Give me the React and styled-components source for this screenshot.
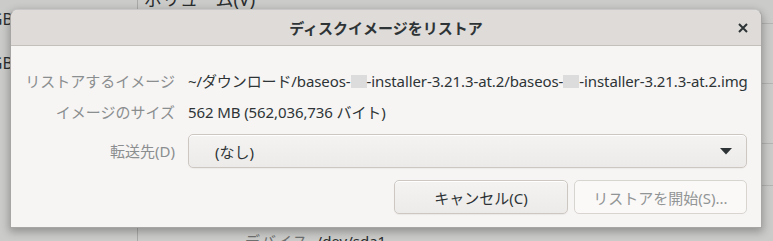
import React from "react";
import styled, { createGlobalStyle } from "styled-components";

const Global = createGlobalStyle`
  html, body { margin: 0; padding: 0; }
  body {
    width: 773px; height: 241px; overflow: hidden;
    font-family: "Noto Sans", "Noto Sans CJK JP", sans-serif;
    background: #cbcbc9;
  }
`;

const Screen = styled.div`
  position: relative;
  width: 773px;
  height: 241px;
  overflow: hidden;
  background: #cbcbc9;
  display: flex;
`;

const Sidebar = styled.div`
  width: 137px;
  flex: none;
  border-right: 1px solid #a9a9a7;
  display: flex;
  flex-direction: column;
  padding-top: 9px;
  gap: 6px;
`;

const SideItem = styled.div`
  margin-left: -36px;
  display: flex;
  flex-direction: column;
  color: #2a2d2e;
`;

const SideTitle = styled.span`
  font-size: 16px;
  line-height: 20px;
`;

const SideSub = styled.span`
  font-size: 13px;
  line-height: 17px;
  margin-top: 1px;
`;

const Main = styled.div`
  flex: 1;
  display: flex;
  flex-direction: column;
`;

const MainTitle = styled.div`
  margin-top: -12px;
  padding-left: 6px;
  font-size: 18px;
  line-height: 22px;
  color: #2a2d2e;
`;

const ListLine = styled.div`
  height: 1px;
  background: #b4b4b2;
  margin-top: ${(p) => p.$gap}px;
`;

const BottomInfo = styled.div`
  margin-top: auto;
  display: flex;
  gap: 8px;
  padding-left: 107px;
  font-size: 15px;
  line-height: 18px;
  margin-bottom: -9px;
`;

const InfoLabel = styled.span`
  color: #6f7170;
  letter-spacing: 1px;
`;

const InfoValue = styled.span`
  color: #2a2d2e;
`;

const Dialog = styled.div`
  position: absolute;
  left: 10px;
  top: 9px;
  width: 752px;
  height: 219px;
  box-sizing: border-box;
  border: 1px solid rgba(0, 0, 0, 0.32);
  border-top-color: rgba(0, 0, 0, 0.18);
  border-radius: 8px 8px 0 0;
  background: #f6f5f4;
  box-shadow: 0 3px 9px 1px rgba(0, 0, 0, 0.28);
  display: flex;
  flex-direction: column;
  overflow: hidden;
`;

const Header = styled.div`
  height: 35px;
  flex: none;
  display: flex;
  align-items: center;
  justify-content: center;
  position: relative;
  background: #dedbd8;
  border-bottom: 1px solid #c3bfbb;
`;

const Title = styled.div`
  font-size: 15px;
  font-weight: 700;
  color: #2e3436;
`;

const Close = styled.div`
  position: absolute;
  right: 12px;
  top: 12px;
  width: 12px;
  height: 12px;
  display: flex;
  align-items: center;
  justify-content: center;
`;

const Body = styled.div`
  flex: 1;
  display: flex;
  flex-direction: column;
  padding: 24px 14px 14px 0;
`;

const Row = styled.div`
  display: grid;
  grid-template-columns: 164px 1fr;
  column-gap: 13px;
  align-items: center;
  margin-top: ${(p) => p.$mt || 0}px;
`;

const Label = styled.div`
  text-align: right;
  font-size: 15px;
  line-height: 22px;
  color: #8b8e8f;
  white-space: nowrap;
`;

const Value = styled.div`
  font-size: 15px;
  line-height: 22px;
  color: #2e3436;
  white-space: nowrap;
  letter-spacing: -0.1px;
`;

const Redact = styled.span`
  display: inline-block;
  width: 16px;
  height: 13px;
  background: #dcdcdc;
  vertical-align: -1px;
`;

const Combo = styled.div`
  height: 34px;
  box-sizing: border-box;
  border: 1px solid #cdc7c2;
  border-radius: 5px;
  background: linear-gradient(#f4f3f2, #edebe9);
  box-shadow: inset 0 1px #ffffff, 0 1px 1px rgba(0, 0, 0, 0.04);
  display: flex;
  align-items: center;
  justify-content: space-between;
  padding: 0 14px 0 26px;
  font-size: 15px;
  color: #2e3436;
`;

const Buttons = styled.div`
  margin-top: 12px;
  display: flex;
  justify-content: flex-end;
  gap: 6px;
`;

const Button = styled.div`
  width: ${(p) => p.$w}px;
  height: 34px;
  box-sizing: border-box;
  border: 1px solid ${(p) => (p.$disabled ? "#d8d4d0" : "#cdc7c2")};
  border-radius: 5px;
  background: ${(p) =>
    p.$disabled ? "#faf9f8" : "linear-gradient(#f4f3f2, #edebe9)"};
  box-shadow: ${(p) =>
    p.$disabled ? "none" : "inset 0 1px #ffffff, 0 1px 1px rgba(0,0,0,0.05)"};
  display: flex;
  align-items: center;
  justify-content: center;
  font-size: 15px;
  color: ${(p) => (p.$disabled ? "#929595" : "#2e3436")};
`;

export default function App() {
  return (
    <>
      <Global />
      <Screen>
        <Sidebar>
          <SideItem>
            <SideTitle>8.0 GB</SideTitle>
            <SideSub>sdat</SideSub>
          </SideItem>
          <SideItem>
            <SideTitle>8.0 GB</SideTitle>
            <SideSub>sdat</SideSub>
          </SideItem>
        </Sidebar>
        <Main>
          <MainTitle>ボリューム(V)</MainTitle>
          <ListLine $gap={13} />
          <ListLine $gap={59} />
          <ListLine $gap={59} />
          <ListLine $gap={41} />
          <BottomInfo>
            <InfoLabel>デバイス</InfoLabel>
            <InfoValue>/dev/sda1</InfoValue>
          </BottomInfo>
        </Main>

        <Dialog>
          <Header>
            <Title>ディスクイメージをリストア</Title>
            <Close>
              <svg width="10" height="10" viewBox="0 0 10 10">
                <path
                  d="M1 1 L9 9 M9 1 L1 9"
                  stroke="#2e3436"
                  strokeWidth="2"
                  strokeLinecap="butt"
                />
              </svg>
            </Close>
          </Header>
          <Body>
            <Row>
              <Label>リストアするイメージ</Label>
              <Value>
                ~/ダウンロード/baseos-<Redact />-installer-3.21.3-at.2/baseos-
                <Redact />-installer-3.21.3-at.2.img
              </Value>
            </Row>
            <Row $mt={9}>
              <Label>イメージのサイズ</Label>
              <Value>562 MB (562,036,736 バイト)</Value>
            </Row>
            <Row $mt={11}>
              <Label>転送先(D)</Label>
              <Combo>
                <span>(なし)</span>
                <svg width="12" height="7" viewBox="0 0 12 7">
                  <path d="M0 0 H12 L6 6.5 Z" fill="#2e3436" />
                </svg>
              </Combo>
            </Row>
            <Buttons>
              <Button $w={174}>キャンセル(C)</Button>
              <Button $w={173} $disabled>
                リストアを開始(S)...
              </Button>
            </Buttons>
          </Body>
        </Dialog>
      </Screen>
    </>
  );
}
